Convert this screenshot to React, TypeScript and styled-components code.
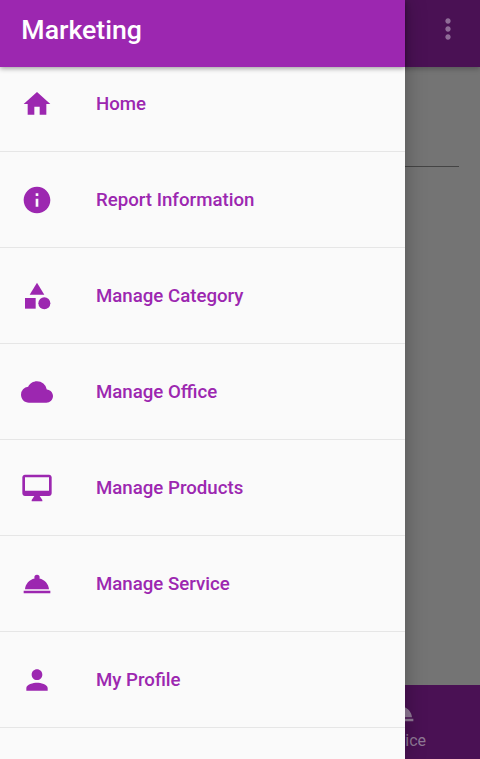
import React from 'react';
import styled, { createGlobalStyle } from 'styled-components';
import {
  MdCategory,
  MdCloud,
  MdHome,
  MdInfo,
  MdMoreVert,
  MdPerson,
  MdRoomService,
} from 'react-icons/md';

const purple = '#9c27b0';

const GlobalStyle = createGlobalStyle`
  *, *::before, *::after { box-sizing: border-box; }
  html, body { margin: 0; height: 100%; overflow: hidden; }
  body { font-family: Roboto, "Noto Sans", sans-serif; }
`;

const Screen = styled.div`
  position: relative;
  width: 480px;
  height: 759px;
  overflow: hidden;
`;

const Page = styled.div`
  display: flex;
  flex-direction: column;
  height: 100%;
  background: #747474;
`;

const PageBar = styled.header`
  display: flex;
  flex: none;
  justify-content: flex-end;
  height: 66.67px;
  padding: 13.33px 16px 0 0;
  color: #8f6c97;
  background: #4a1154;
  box-shadow: 0 2px 5px rgba(0, 0, 0, 0.25);
`;

const PageBody = styled.main`
  flex: 1;
  padding: 99px 21.33px 0;
`;

const FieldLine = styled.div`
  height: 1px;
  background: #444;
`;

const BottomNav = styled.nav`
  display: grid;
  flex: none;
  grid-template-columns: repeat(3, 1fr);
  height: 74px;
  background: #4a1154;
`;

const NavTab = styled.div`
  display: flex;
  grid-column: 3;
  flex-direction: column;
  align-items: center;
  padding-top: 11px;
  color: #8f7895;
  font-size: 16px;
  line-height: 19px;
  gap: 3px;
`;

const Drawer = styled.aside`
  position: absolute;
  top: 0;
  left: 0;
  display: flex;
  flex-direction: column;
  width: 405.33px;
  height: 100%;
  background: #fafafa;
  box-shadow: 0 0 20px rgba(0, 0, 0, 0.28);
`;

const DrawerBar = styled.header`
  z-index: 1;
  flex: none;
  height: 67px;
  padding: 14px 21.33px 0;
  color: #fff;
  background: ${purple};
  box-shadow: 0 1.5px 5px rgba(0, 0, 0, 0.38);
`;

const Title = styled.h1`
  margin: 0;
  font-size: 26.67px;
  font-weight: 500;
  line-height: 32px;
`;

const Menu = styled.ul`
  margin: -11px 0 0;
  padding: 0;
  list-style: none;
`;

const MenuItem = styled.li`
  display: flex;
  align-items: center;
  height: 96px;
  padding: 1px 21.33px 0;
  gap: 42.67px;
  color: ${purple};
  border-bottom: 1px solid #e6e6e6;
`;

const MenuLabel = styled.span`
  font-size: 18.67px;
  font-weight: 500;
  line-height: 24px;
`;

function DesktopIcon({ size }: { size: number }) {
  return (
    <svg width={size} height={size} viewBox="0 0 24 24" fill="currentColor" aria-hidden="true">
      <path d="M21 2H3c-1.1 0-2 .9-2 2v12c0 1.1.9 2 2 2h7l-2 3v1h8v-1l-2-3h7c1.1 0 2-.9 2-2V4c0-1.1-.9-2-2-2zm0 12H3V4h18v10z" />
    </svg>
  );
}

const items: { icon: React.ComponentType<{ size: number }>; label: string }[] = [
  { icon: MdHome, label: 'Home' },
  { icon: MdInfo, label: 'Report Information' },
  { icon: MdCategory, label: 'Manage Category' },
  { icon: MdCloud, label: 'Manage Office' },
  { icon: DesktopIcon, label: 'Manage Products' },
  { icon: MdRoomService, label: 'Manage Service' },
  { icon: MdPerson, label: 'My Profile' },
];

export default function App() {
  return (
    <Screen>
      <GlobalStyle />
      <Page>
        <PageBar>
          <MdMoreVert size={32} />
        </PageBar>
        <PageBody>
          <FieldLine />
        </PageBody>
        <BottomNav>
          <NavTab>
            <MdRoomService size={32} />
            Service
          </NavTab>
        </BottomNav>
      </Page>
      <Drawer>
        <DrawerBar>
          <Title>Marketing</Title>
        </DrawerBar>
        <Menu>
          {items.map(({ icon: Icon, label }) => (
            <MenuItem key={label}>
              <Icon size={32} />
              <MenuLabel>{label}</MenuLabel>
            </MenuItem>
          ))}
        </Menu>
      </Drawer>
    </Screen>
  );
}
